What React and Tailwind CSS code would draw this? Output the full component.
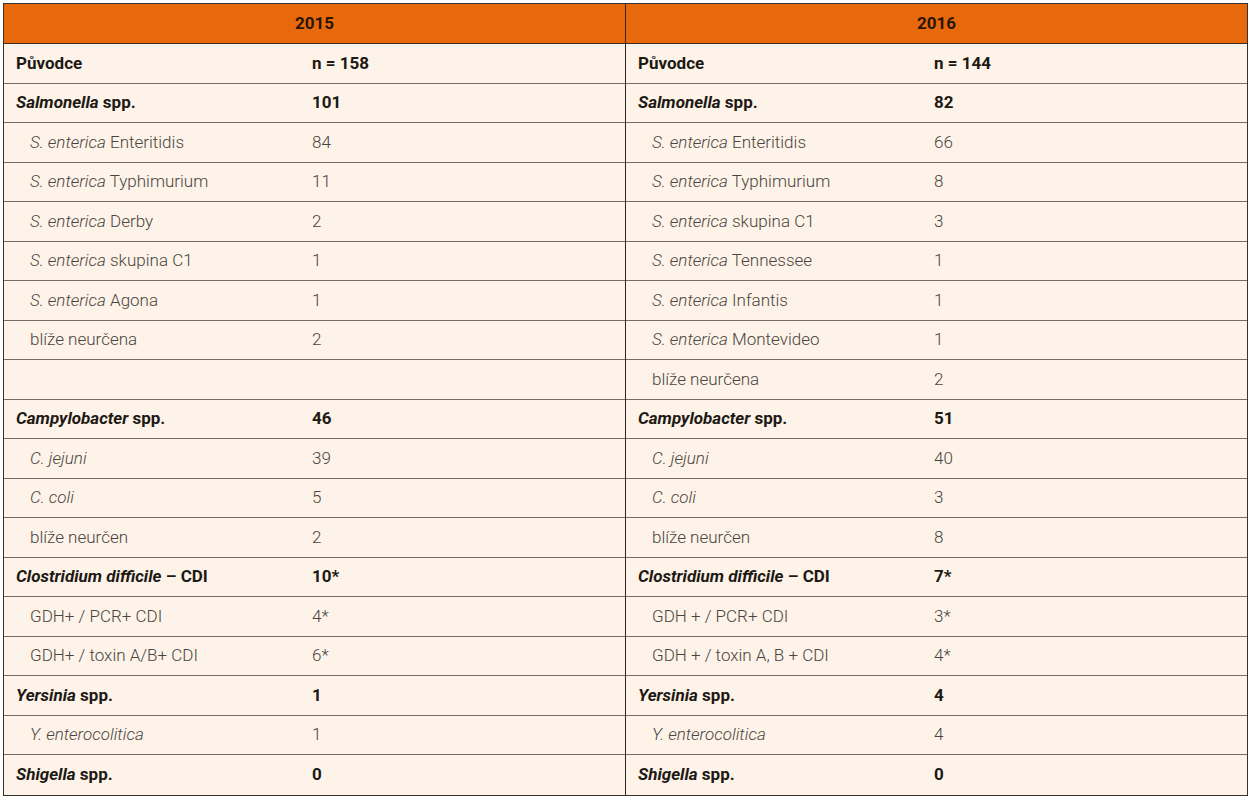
const data2015 = [
  { kind: "head", name: "Původce", value: "n = 158" },
  { kind: "bold", italic: "Salmonella", rest: " spp.", value: "101" },
  { kind: "sub", italic: "S. enterica", rest: " Enteritidis", value: "84" },
  { kind: "sub", italic: "S. enterica", rest: " Typhimurium", value: "11" },
  { kind: "sub", italic: "S. enterica", rest: " Derby", value: "2" },
  { kind: "sub", italic: "S. enterica", rest: " skupina C1", value: "1" },
  { kind: "sub", italic: "S. enterica", rest: " Agona", value: "1" },
  { kind: "sub", rest: "blíže neurčena", value: "2" },
  { kind: "sub", rest: "", value: "" },
  { kind: "bold", italic: "Campylobacter", rest: " spp.", value: "46" },
  { kind: "sub", italic: "C. jejuni", value: "39" },
  { kind: "sub", italic: "C. coli", value: "5" },
  { kind: "sub", rest: "blíže neurčen", value: "2" },
  { kind: "bold", italic: "Clostridium difficile", rest: " – CDI", value: "10*" },
  { kind: "sub", rest: "GDH+ / PCR+ CDI", value: "4*" },
  { kind: "sub", rest: "GDH+ / toxin A/B+ CDI", value: "6*" },
  { kind: "bold", italic: "Yersinia", rest: " spp.", value: "1" },
  { kind: "sub", italic: "Y. enterocolitica", value: "1" },
  { kind: "bold", italic: "Shigella", rest: " spp.", value: "0" },
];

const data2016 = [
  { kind: "head", name: "Původce", value: "n = 144" },
  { kind: "bold", italic: "Salmonella", rest: " spp.", value: "82" },
  { kind: "sub", italic: "S. enterica", rest: " Enteritidis", value: "66" },
  { kind: "sub", italic: "S. enterica", rest: " Typhimurium", value: "8" },
  { kind: "sub", italic: "S. enterica", rest: " skupina C1", value: "3" },
  { kind: "sub", italic: "S. enterica", rest: " Tennessee", value: "1" },
  { kind: "sub", italic: "S. enterica", rest: " Infantis", value: "1" },
  { kind: "sub", italic: "S. enterica", rest: " Montevideo", value: "1" },
  { kind: "sub", rest: "blíže neurčena", value: "2" },
  { kind: "bold", italic: "Campylobacter", rest: " spp.", value: "51" },
  { kind: "sub", italic: "C. jejuni", value: "40" },
  { kind: "sub", italic: "C. coli", value: "3" },
  { kind: "sub", rest: "blíže neurčen", value: "8" },
  { kind: "bold", italic: "Clostridium difficile", rest: " – CDI", value: "7*" },
  { kind: "sub", rest: "GDH + / PCR+ CDI", value: "3*" },
  { kind: "sub", rest: "GDH + / toxin A, B + CDI", value: "4*" },
  { kind: "bold", italic: "Yersinia", rest: " spp.", value: "4" },
  { kind: "sub", italic: "Y. enterocolitica", value: "4" },
  { kind: "bold", italic: "Shigella", rest: " spp.", value: "0" },
];

const Row = ({ row, last }) => {
  const line = last ? "" : "border-b border-[#776b63]";
  if (row.kind === "sub") {
    return (
      <div className={`flex items-center h-[39.5px] ${line} text-[17px] font-light text-[#4a4540]`}>
        <div className="w-[308px] pl-[26px]">
          {row.italic && <i>{row.italic}</i>}
          {row.rest}
        </div>
        <div>{row.value}</div>
      </div>
    );
  }
  return (
    <div className={`flex items-center h-[39.5px] ${line} text-[17px] font-bold text-[#1d1915]`}>
      <div className="w-[308px] pl-[12px]">
        {row.name}
        {row.italic && <i>{row.italic}</i>}
        {row.rest}
      </div>
      <div>{row.value}</div>
    </div>
  );
};

const Half = ({ year, rows, right }) => (
  <div className={`flex flex-col ${right ? "" : "border-r border-[#2e2622]"}`}>
    <div className="h-[40px] flex items-center justify-center bg-[#e8690c] border-b border-[#3a2e27] text-[17px] font-bold text-[#2a1508]">
      {year}
    </div>
    {rows.map((r, i) => (
      <Row key={i} row={r} last={i === rows.length - 1} />
    ))}
  </div>
);

export default function App() {
  return (
    <div
      className="w-[1251px] h-[800px] bg-white pt-[3px] pl-[3px]"
      style={{ fontFamily: "Roboto, 'Liberation Sans', sans-serif" }}
    >
      <div className="w-[1245px] grid grid-cols-[622px_1fr] bg-[#fdf3e8] border-[1.5px] border-[#3a302b]">
        <Half year="2015" rows={data2015} />
        <Half year="2016" rows={data2016} right />
      </div>
    </div>
  );
}
